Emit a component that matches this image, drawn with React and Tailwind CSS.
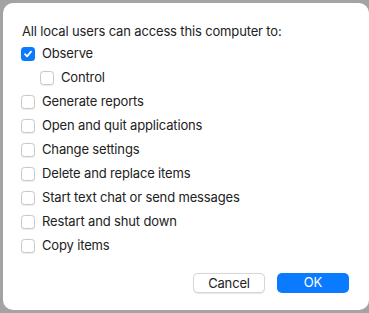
import { useState } from 'react';

const items = [
  { label: 'Observe', checked: true },
  { label: 'Control', indent: true },
  { label: 'Generate reports' },
  { label: 'Open and quit applications' },
  { label: 'Change settings' },
  { label: 'Delete and replace items' },
  { label: 'Start text chat or send messages' },
  { label: 'Restart and shut down' },
  { label: 'Copy items' },
];

function Box({ checked }) {
  if (checked) {
    return (
      <span className="flex h-[14px] w-[14px] items-center justify-center rounded-[3.5px] bg-[#0a7aff]">
        <svg width="10" height="10" viewBox="0 0 10 10">
          <path d="M2 5.2 L4.1 7.4 L8 2.6" fill="none" stroke="#fff" strokeWidth="1.8" strokeLinecap="round" strokeLinejoin="round" />
        </svg>
      </span>
    );
  }
  return <span className="block h-[14px] w-[14px] rounded-[3.5px] border border-[#c9c9c9] bg-white shadow-[0_0.5px_1px_rgba(0,0,0,0.08)]" />;
}

export default function App() {
  const [state, setState] = useState(items.map((i) => !!i.checked));

  return (
    <div className="h-[313px] w-[369px] bg-[#a3a3a3] pl-[3px] pt-[3px] pb-[3px]" style={{ fontFamily: 'Inter, "Liberation Sans", sans-serif' }}>
      <div className="flex h-full flex-col rounded-[10px] bg-white pl-[18px] pr-[20px] pt-[20px] text-[13px] tracking-[-0.15px] text-[#222]">
        <p className="pl-[1px] leading-[16px]">All local users can access this computer to:</p>
        <div className="mt-[3px] flex flex-col">
          {items.map((item, i) => (
            <label
              key={item.label}
              className={`flex h-[24px] items-center gap-[7px] ${item.indent ? 'pl-[19px]' : ''}`}
              onClick={() => setState(state.map((v, j) => (j === i ? !v : v)))}
            >
              <Box checked={state[i]} />
              <span>{item.label}</span>
            </label>
          ))}
        </div>
        <div className="mt-auto mb-[17px] flex justify-end gap-[12px]">
          <button className="h-[20px] w-[72px] rounded-[5px] border border-[#d6d6d6] bg-white text-[13px] text-[#222] shadow-[0_0.5px_1px_rgba(0,0,0,0.1)]">
            Cancel
          </button>
          <button className="h-[20px] w-[72px] rounded-[5px] bg-[#0a7aff] text-[13px] text-white">
            OK
          </button>
        </div>
      </div>
    </div>
  );
}
